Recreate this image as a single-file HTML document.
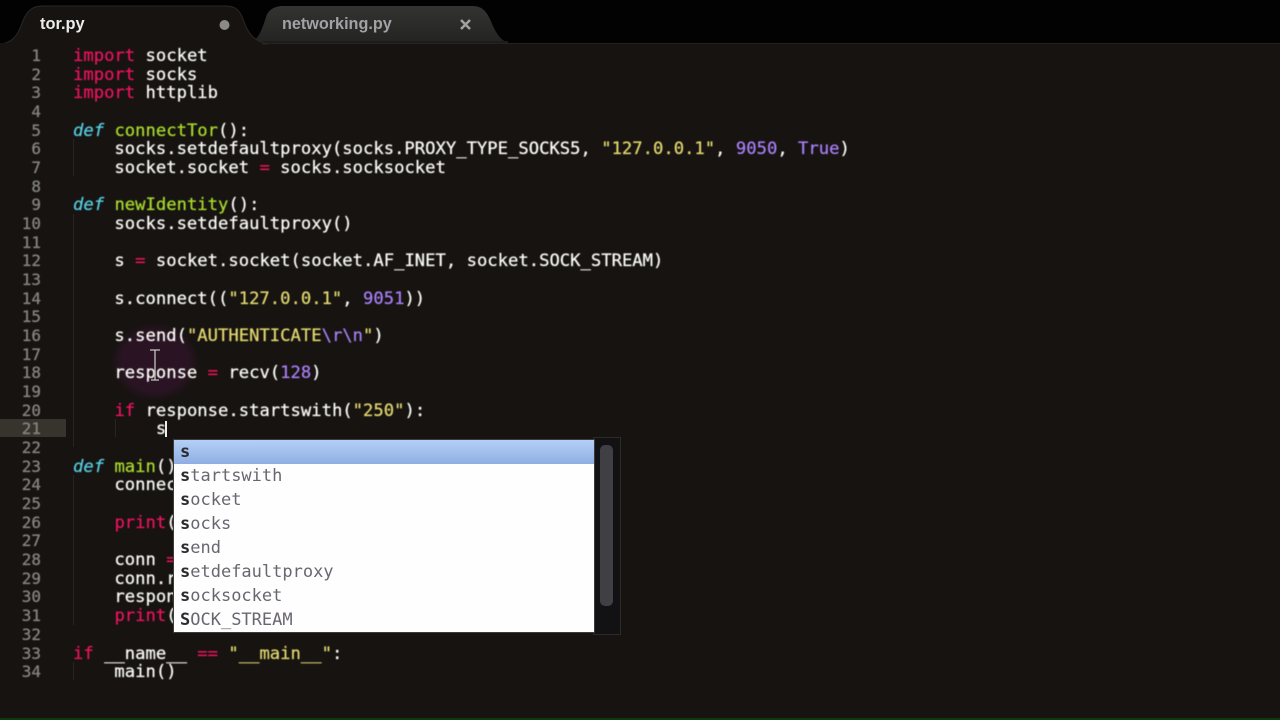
<!DOCTYPE html>
<html><head><meta charset="utf-8"><style>
html,body{margin:0;padding:0;width:1280px;height:720px;overflow:hidden;background:#161310}
#root{position:relative;width:1280px;height:720px;overflow:hidden;background:#161310}
.mono{font-family:"DejaVu Sans Mono","Liberation Mono",monospace;font-size:17.22px;white-space:pre}
#code{position:absolute;left:73px;top:47px;line-height:18.67px;color:#fbfbf5;filter:blur(.4px);-webkit-text-stroke:.25px currentColor}
#nums{position:absolute;left:0;width:41px;top:47px;line-height:18.67px;text-align:right;color:#85857f;filter:blur(.4px);font-size:16px;-webkit-text-stroke:.3px currentColor}
.k{color:#e8145f}.d{color:#58cde4;font-style:italic}.f{color:#a8da2e}.s{color:#e2d86f}.n{color:#a87ff5}
.g{position:absolute;width:1px;background:#272521}
#popup{position:absolute;left:174px;top:440px;width:420px;height:192px;background:#fefefe;box-shadow:0 0 0 1px #3c3b38;white-space:normal}
#popup div{height:24px;line-height:24px;padding-left:6px;color:#6a6670;filter:blur(.35px);font-size:17px;white-space:pre}
#popup b{color:#2c2c30;font-weight:700}
</style></head><body><div id="root">
<div style="position:absolute;left:0;top:0;width:1280px;height:43px;background:#020202"></div>
<div style="position:absolute;left:0;top:43px;width:1280px;height:1px;background:#24221f"></div>
<svg style="position:absolute;left:0;top:0" width="540" height="46">
<defs><linearGradient id="t2" x1="0" y1="0" x2="0" y2="1"><stop offset="0" stop-color="#333331"/><stop offset="1" stop-color="#232321"/></linearGradient></defs>
<path d="M250 44 C260 38 263 26 266 17 C268 10 274 6 284 6 L472 6 C482 6 486 11 490 19 C495 31 499 41 512 44 Z" fill="url(#t2)"/>
<rect x="262" y="41" width="246" height="2" fill="#1c1c1a"/>
<path d="M0 44 C12 43 17 36 21 26 C25 14 30 6 42 6 L226 6 C236 6 240 11 243 19 C247 31 252 41 268 44 Z" fill="#161310" stroke="#2a2825" stroke-width="1"/>
<rect x="0" y="43" width="262" height="3" fill="#161310"/>
<path d="M461 20 L470 29 M470 20 L461 29" stroke="#a0a0a0" stroke-width="2.600"/>
<circle cx="224.500" cy="25" r="5" fill="#8a8a88"/>
</svg>
<div style="position:absolute;left:40px;top:15px;font:700 16.400px 'Liberation Sans',sans-serif;color:#ececec;line-height:19px;filter:blur(.3px)">tor.py</div>
<div style="position:absolute;left:282px;top:15px;font:700 16.200px 'Liberation Sans',sans-serif;color:#a2a2a6;line-height:19px;filter:blur(.3px)">networking.py</div>

<div style="position:absolute;left:0;top:419px;width:66px;height:18px;background:#37342e"></div>
<div style="position:absolute;left:110px;top:322px;width:90px;height:80px;border-radius:50%;background:radial-gradient(closest-side,#2a1424 0%,#2a1424 72%,#161310 100%)"></div>

<div class="g" style="left:73px;top:139px;height:37px"></div>
<div class="g" style="left:73px;top:214px;height:233px"></div>
<div class="g" style="left:73px;top:475px;height:150px"></div>
<div class="g" style="left:73px;top:662px;height:18px"></div>
<div class="g" style="left:115px;top:419px;height:18px"></div>

<div id="nums" class="mono">1
2
3
4
5
6
7
8
9
10
11
12
13
14
15
16
17
18
19
20
21
22
23
24
25
26
27
28
29
30
31
32
33
34</div>
<div id="code" class="mono"><span class="k">import</span> socket
<span class="k">import</span> socks
<span class="k">import</span> httplib

<span class="d">def</span> <span class="f">connectTor</span>():
    socks.setdefaultproxy(socks.PROXY_TYPE_SOCKS5, <span class="s">"127.0.0.1"</span>, <span class="n">9050</span>, <span class="n">True</span>)
    socket.socket <span class="k">=</span> socks.socksocket

<span class="d">def</span> <span class="f">newIdentity</span>():
    socks.setdefaultproxy()

    s <span class="k">=</span> socket.socket(socket.AF_INET, socket.SOCK_STREAM)

    s.connect((<span class="s">"127.0.0.1"</span>, <span class="n">9051</span>))

    s.send(<span class="s">"AUTHENTICATE</span><span class="n">\r\n</span><span class="s">"</span>)

    response <span class="k">=</span> recv(<span class="n">128</span>)

    <span class="k">if</span> response.startswith(<span class="s">"250"</span>):
        s

<span class="d">def</span> <span class="f">main</span>():
    connectTor()

    <span class="k">print</span>(<span class="s">"x"</span>)

    conn <span class="k">=</span> httplib
    conn.request
    response
    <span class="k">print</span>(response)

<span class="k">if</span> __name__ <span class="k">==</span> <span class="s">"__main__"</span>:
    main()</div>
<div style="position:absolute;left:165px;top:421px;width:1.500px;height:16px;background:#eee"></div>

<svg style="position:absolute;left:148px;top:348px" width="14" height="36"><path d="M2 2 H12 M7 2 V32 M3 32 H11" stroke="#c4c4bf" stroke-width="1.300" fill="none"/></svg>

<div style="position:absolute;left:594px;top:438px;width:26px;height:196px;background:#121214;box-shadow:0 0 0 1px #2c2b29"></div>
<div style="position:absolute;left:600px;top:445px;width:13px;height:161px;border-radius:5px;background:#403f43"></div>
<div id="popup" class="mono"><div style="background:linear-gradient(#b4d0f6,#8fade2)"><b>s</b></div><div><b>s</b>tartswith</div><div><b>s</b>ocket</div><div><b>s</b>ocks</div><div><b>s</b>end</div><div><b>s</b>etdefaultproxy</div><div><b>s</b>ocksocket</div><div><b>S</b>OCK_STREAM</div></div>
<div style="position:absolute;left:0;top:718px;width:1280px;height:2px;background:#0c3a0c"></div>
</div></body></html>
